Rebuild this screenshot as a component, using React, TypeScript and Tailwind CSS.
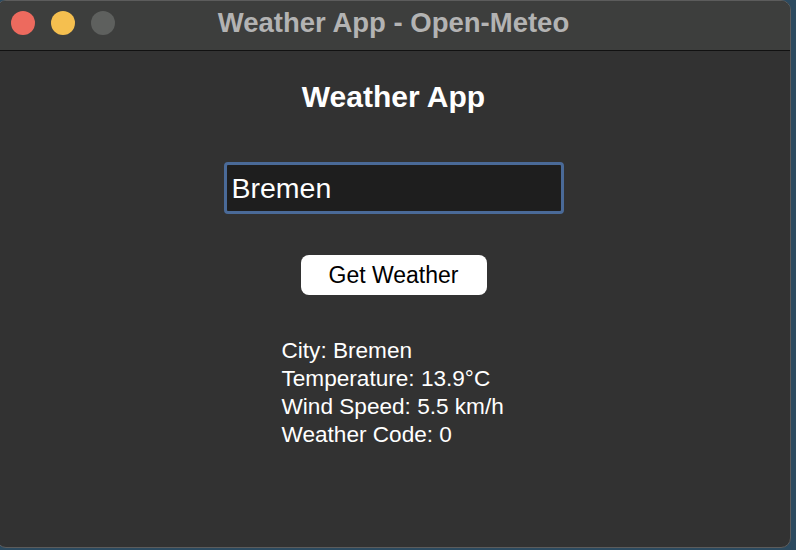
import React, { useState } from "react";

const result = [
  "City: Bremen",
  "Temperature: 13.9°C",
  "Wind Speed: 5.5 km/h",
  "Weather Code: 0",
];

export default function App() {
  const [city, setCity] = useState("Bremen");

  return (
    <div
      className="w-[796px] h-[550px] bg-[#2c4a5f] overflow-hidden"
      style={{ fontFamily: '"Liberation Sans", Arial, sans-serif' }}
    >
      <div className="-ml-[4px] w-[795px] h-[548px] flex flex-col bg-[#323232] rounded-[10px] border border-[#5c5c5c] overflow-hidden">
        {/* Title bar */}
        <div className="relative h-[50px] flex items-center justify-center bg-[#3d3e3d] border-b border-[#111]">
          <div className="absolute left-[14px] top-[10px] flex gap-[16px]">
            <span className="w-[24px] h-[24px] rounded-full bg-[#ed6a5e]" />
            <span className="w-[24px] h-[24px] rounded-full bg-[#f5bf4f]" />
            <span className="w-[24px] h-[24px] rounded-full bg-[#5e605e]" />
          </div>
          <span className="text-[27.5px] font-bold text-[#b3b3b3] leading-none -mt-[5px]">
            Weather App - Open-Meteo
          </span>
        </div>

        {/* Content */}
        <div className="flex flex-col items-center pt-[29px]">
          <h1 className="text-[30px] font-bold text-white leading-[34px]">
            Weather App
          </h1>

          <input
            value={city}
            onChange={(e) => setCity(e.target.value)}
            className="mt-[48px] w-[340px] h-[52px] px-[5px] bg-[#1e1e1e] border-[3px] border-[#4a6a98] rounded-[4px] text-white text-[28.5px] outline-none"
          />

          <button className="mt-[41px] w-[186px] h-[40px] bg-white rounded-[8px] text-black text-[23px]">
            Get Weather
          </button>

          <div className="mt-[42px] ml-[12px] flex flex-col text-white text-[22.6px] leading-[28px] w-[236px]">
            {result.map((line) => (
              <div key={line}>{line}</div>
            ))}
          </div>
        </div>
      </div>
    </div>
  );
}
